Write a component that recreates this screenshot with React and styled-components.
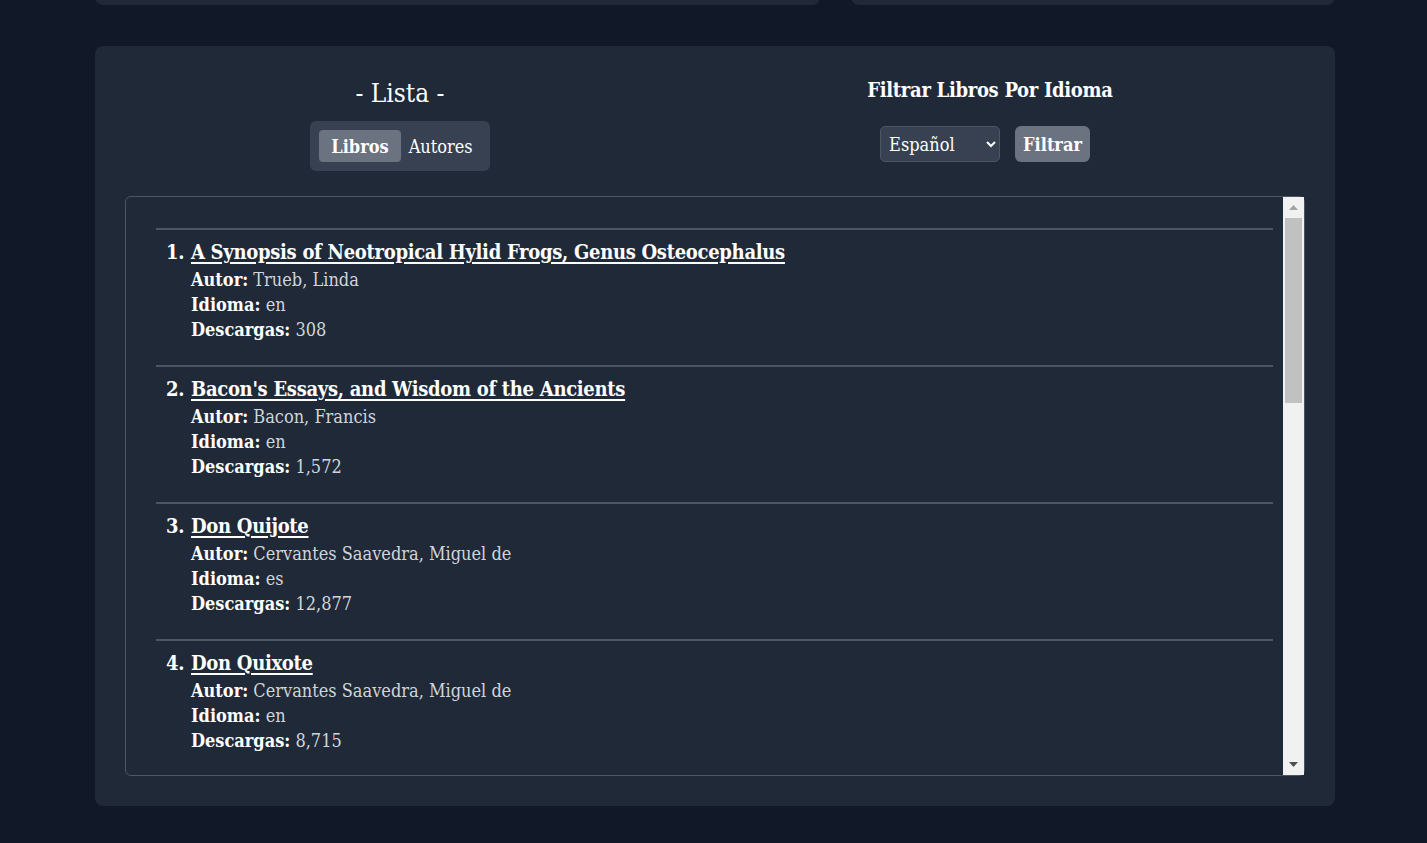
import React, { useState } from 'react'
import styled, { createGlobalStyle } from 'styled-components'

const GlobalStyle = createGlobalStyle`
  body {
    margin: 0;
    background: #111827;
    font-family: "DejaVu Serif Condensed", "DejaVu Serif", serif;
    color: #fff;
  }
`

const Page = styled.div`
  width: 1240px;
  padding-left: 95px;
  overflow: hidden;
`

const TopRow = styled.div`
  display: flex;
  gap: 31px;
  margin-top: -295px;
`

const TopCard = styled.div`
  height: 300px;
  width: ${p => p.$w}px;
  background: #1f2937;
  border-radius: 8px;
`

const Card = styled.section`
  margin-top: 41px;
  background: #1f2937;
  border-radius: 8px;
  padding: 30px;
`

const Header = styled.div`
  display: grid;
  grid-template-columns: 550px 550px;
  gap: 40px;
`

const Column = styled.div`
  display: flex;
  flex-direction: column;
  align-items: center;
`

const Title = styled.h2`
  margin: 0;
  font-size: 26px;
  font-weight: 400;
  line-height: 34px;
`

const Toggle = styled.div`
  margin-top: 11px;
  display: flex;
  padding: 9px;
  background: #374151;
  border-radius: 6px;
`

const ToggleButton = styled.button`
  font-family: inherit;
  font-size: 18px;
  height: 32px;
  border: none;
  border-radius: 4px;
  color: #fff;
  cursor: pointer;
  font-weight: ${p => (p.$active ? 700 : 400)};
  background: ${p => (p.$active ? '#6b7280' : 'transparent')};
  padding: ${p => (p.$active ? '0 12px' : '0 8px')};
`

const FilterTitle = styled.h3`
  margin: 0;
  font-size: 20px;
  font-weight: 700;
  line-height: 28px;
  letter-spacing: -0.3px;
`

const FilterRow = styled.div`
  margin-top: 22px;
  display: flex;
  gap: 15px;
  margin-right: 10px;
`

const Select = styled.select`
  width: 120px;
  height: 36px;
  font-family: inherit;
  font-size: 18px;
  color: #fff;
  background: #374151;
  border: 1px solid #4b5563;
  border-radius: 5px;
  padding: 0 4px;
`

const FilterButton = styled.button`
  height: 36px;
  padding: 0 8px;
  font-family: inherit;
  font-size: 18px;
  font-weight: 700;
  color: #fff;
  background: #6b7280;
  border: none;
  border-radius: 6px;
`

const ListBox = styled.div`
  margin-top: 25px;
  height: 578px;
  display: flex;
  border: 1px solid #4b5563;
  border-radius: 6px;
`

const ScrollArea = styled.div`
  flex: 1;
  overflow-y: auto;
  scrollbar-width: none;
  &::-webkit-scrollbar {
    display: none;
  }
`

const ScrollBar = styled.div`
  width: 21px;
  display: flex;
  flex-direction: column;
  background: #f1f1f1;
`

const ArrowButton = styled.div`
  height: 21px;
  display: flex;
  align-items: center;
  justify-content: center;
  color: ${p => p.$color};
`

const Track = styled.div`
  flex: 1;
  padding: 0 2px;
`

const Thumb = styled.div`
  height: 185px;
  background: #c1c1c1;
`

const List = styled.ol`
  list-style: none;
  margin: 0 10px 0 30px;
  padding: 31px 0 0;
`

const Item = styled.li`
  border-top: 2px solid #4b5563;
  padding: 7px 0 23px 10px;
`

const TitleRow = styled.div`
  display: flex;
  font-size: 20px;
  font-weight: 700;
  line-height: 30px;
  letter-spacing: -0.3px;
`

const Num = styled.span`
  width: 25px;
`

const BookLink = styled.a`
  color: #fff;
  text-decoration: underline;
  text-underline-offset: 3px;
`

const Detail = styled.div`
  padding-left: 25px;
  font-size: 18px;
  line-height: 25px;
  color: #d1d5db;

  b {
    color: #fff;
  }
`

const books = [
  { title: 'A Synopsis of Neotropical Hylid Frogs, Genus Osteocephalus', author: 'Trueb, Linda', lang: 'en', downloads: '308' },
  { title: "Bacon's Essays, and Wisdom of the Ancients", author: 'Bacon, Francis', lang: 'en', downloads: '1,572' },
  { title: 'Don Quijote', author: 'Cervantes Saavedra, Miguel de', lang: 'es', downloads: '12,877' },
  { title: 'Don Quixote', author: 'Cervantes Saavedra, Miguel de', lang: 'en', downloads: '8,715' },
  { title: 'Fortunata y Jacinta', author: 'Pérez Galdós, Benito', lang: 'es', downloads: '1,204' },
  { title: 'La Celestina', author: 'Rojas, Fernando de', lang: 'es', downloads: '2,311' },
  { title: 'Niebla', author: 'Unamuno, Miguel de', lang: 'es', downloads: '987' },
  { title: 'Novelas Ejemplares', author: 'Cervantes Saavedra, Miguel de', lang: 'es', downloads: '1,840' },
  { title: 'Platero y yo', author: 'Jiménez, Juan Ramón', lang: 'es', downloads: '1,133' },
  { title: 'The Exemplary Novels of Cervantes', author: 'Cervantes Saavedra, Miguel de', lang: 'en', downloads: '645' },
  { title: 'Trafalgar', author: 'Pérez Galdós, Benito', lang: 'es', downloads: '702' },
  { title: 'Viaje al Parnaso', author: 'Cervantes Saavedra, Miguel de', lang: 'es', downloads: '421' },
]

const Triangle = ({ up }) => (
  <svg width="9" height="5" viewBox="0 0 9 5">
    <path d={up ? 'M0 5h9L4.5 0z' : 'M0 0h9L4.5 5z'} fill="currentColor" />
  </svg>
)

const App = () => {
  const [tab, setTab] = useState('libros')
  return (
    <>
      <GlobalStyle />
      <Page>
        <TopRow>
          <TopCard $w={725} />
          <TopCard $w={484} />
        </TopRow>
        <Card>
          <Header>
            <Column>
              <Title>- Lista -</Title>
              <Toggle>
                <ToggleButton $active={tab === 'libros'} onClick={() => setTab('libros')}>Libros</ToggleButton>
                <ToggleButton $active={tab === 'autores'} onClick={() => setTab('autores')}>Autores</ToggleButton>
              </Toggle>
            </Column>
            <Column>
              <FilterTitle>Filtrar Libros Por Idioma</FilterTitle>
              <FilterRow>
                <Select defaultValue="es">
                  <option value="es">Español</option>
                  <option value="en">Inglés</option>
                  <option value="fr">Francés</option>
                  <option value="pt">Portugués</option>
                </Select>
                <FilterButton>Filtrar</FilterButton>
              </FilterRow>
            </Column>
          </Header>
          <ListBox>
            <ScrollArea>
              <List>
                {books.map((b, i) => (
                  <Item key={b.title}>
                    <TitleRow>
                      <Num>{i + 1}.</Num>
                      <BookLink href="#">{b.title}</BookLink>
                    </TitleRow>
                    <Detail><b>Autor:</b> {b.author}</Detail>
                    <Detail><b>Idioma:</b> {b.lang}</Detail>
                    <Detail><b>Descargas:</b> {b.downloads}</Detail>
                  </Item>
                ))}
              </List>
            </ScrollArea>
            <ScrollBar>
              <ArrowButton $color="#a3a3a3"><Triangle up /></ArrowButton>
              <Track><Thumb /></Track>
              <ArrowButton $color="#505050"><Triangle /></ArrowButton>
            </ScrollBar>
          </ListBox>
        </Card>
      </Page>
    </>
  )
}

export default App
